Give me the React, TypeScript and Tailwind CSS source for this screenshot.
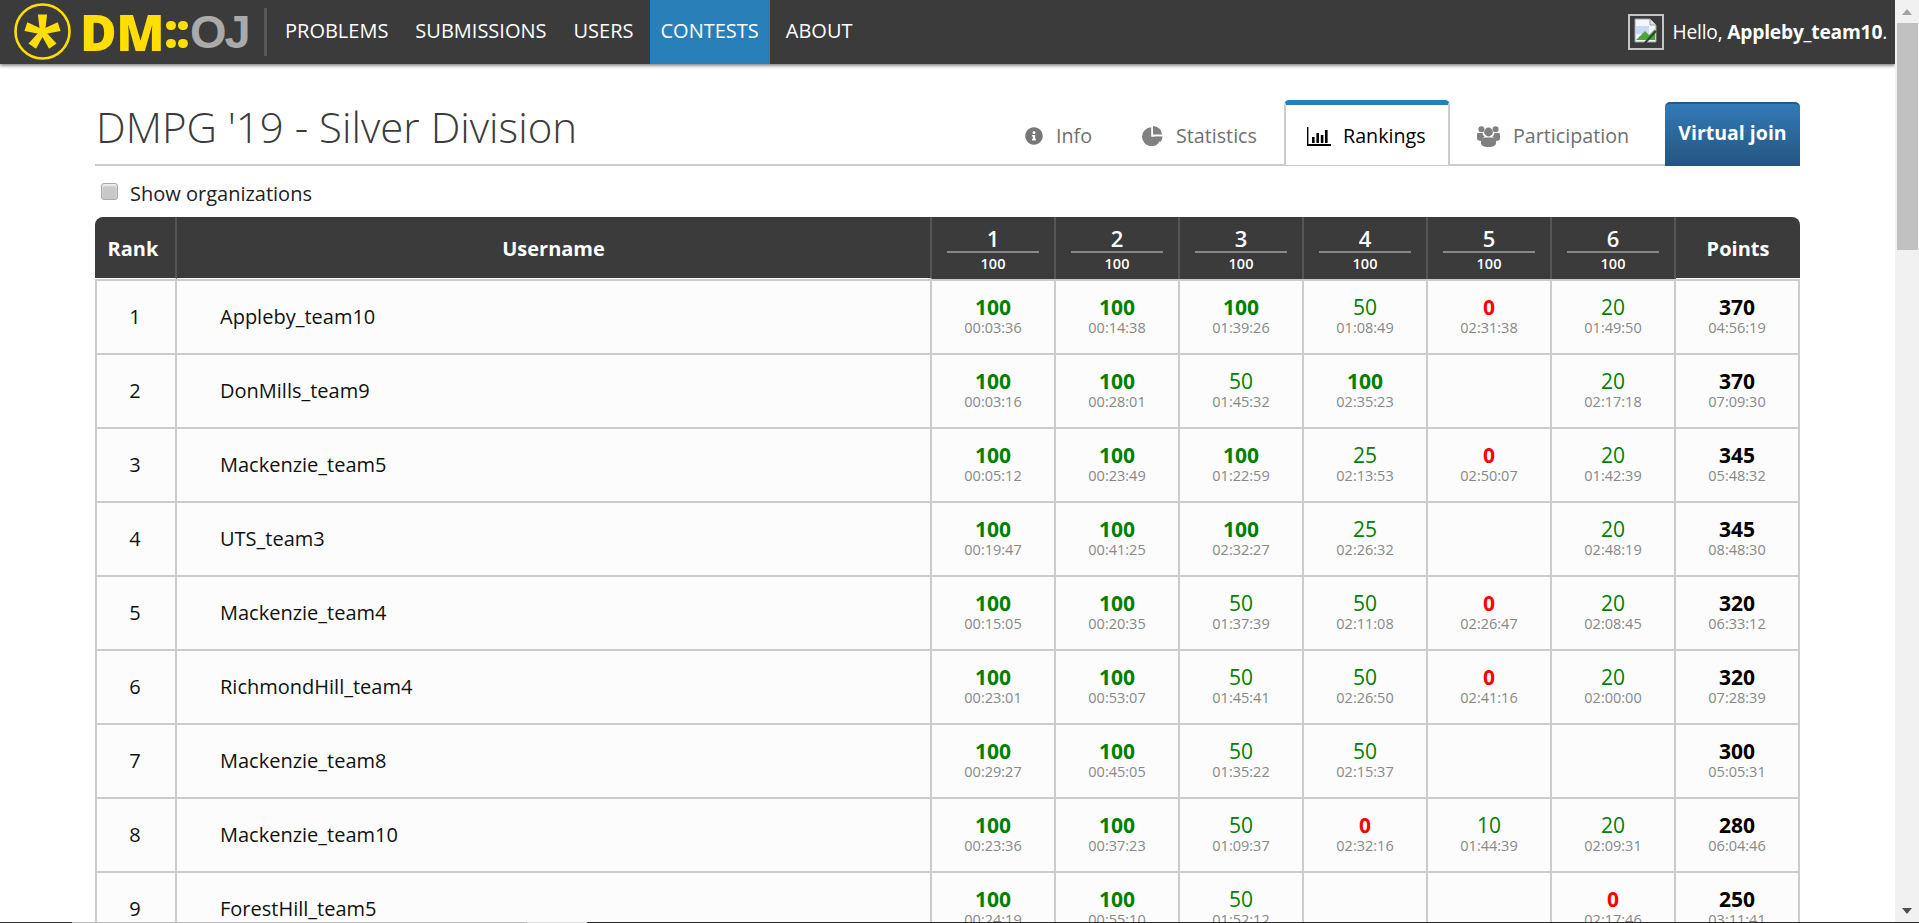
import { FaInfoCircle } from "react-icons/fa";

type Cell = [string, string] | null;
type Row = { name: string; cells: Cell[]; points: string; total: string };

const rows: Row[] = [
  { name: "Appleby_team10", points: "370", total: "04:56:19", cells: [["100", "00:03:36"], ["100", "00:14:38"], ["100", "01:39:26"], ["50", "01:08:49"], ["0", "02:31:38"], ["20", "01:49:50"]] },
  { name: "DonMills_team9", points: "370", total: "07:09:30", cells: [["100", "00:03:16"], ["100", "00:28:01"], ["50", "01:45:32"], ["100", "02:35:23"], null, ["20", "02:17:18"]] },
  { name: "Mackenzie_team5", points: "345", total: "05:48:32", cells: [["100", "00:05:12"], ["100", "00:23:49"], ["100", "01:22:59"], ["25", "02:13:53"], ["0", "02:50:07"], ["20", "01:42:39"]] },
  { name: "UTS_team3", points: "345", total: "08:48:30", cells: [["100", "00:19:47"], ["100", "00:41:25"], ["100", "02:32:27"], ["25", "02:26:32"], null, ["20", "02:48:19"]] },
  { name: "Mackenzie_team4", points: "320", total: "06:33:12", cells: [["100", "00:15:05"], ["100", "00:20:35"], ["50", "01:37:39"], ["50", "02:11:08"], ["0", "02:26:47"], ["20", "02:08:45"]] },
  { name: "RichmondHill_team4", points: "320", total: "07:28:39", cells: [["100", "00:23:01"], ["100", "00:53:07"], ["50", "01:45:41"], ["50", "02:26:50"], ["0", "02:41:16"], ["20", "02:00:00"]] },
  { name: "Mackenzie_team8", points: "300", total: "05:05:31", cells: [["100", "00:29:27"], ["100", "00:45:05"], ["50", "01:35:22"], ["50", "02:15:37"], null, null] },
  { name: "Mackenzie_team10", points: "280", total: "06:04:46", cells: [["100", "00:23:36"], ["100", "00:37:23"], ["50", "01:09:37"], ["0", "02:32:16"], ["10", "01:44:39"], ["20", "02:09:31"]] },
  { name: "ForestHill_team5", points: "250", total: "03:11:41", cells: [["100", "00:24:19"], ["100", "00:55:10"], ["50", "01:52:12"], null, null, ["0", "02:17:46"]] },
];

const navItems = ["PROBLEMS", "SUBMISSIONS", "USERS", "CONTESTS", "ABOUT"];
const gridCols = "grid grid-cols-[82px_755px_repeat(6,124px)_124px]";

function Logo() {
  return (
    <div className="flex items-center h-16 pl-[14px] w-[264px]">
      <svg width="58" height="58" viewBox="0 0 58 58" className="shrink-0">
        <circle cx="28.5" cy="28.5" r="27" fill="none" stroke="#ffde00" strokeWidth="2.6" />
        <g fill="#ffde00" transform="translate(28.5 29)">
          {[0, 72, 144, 216, 288].map((deg) => (
            <path key={deg} d="M-4.6 -17.5 L4.6 -17.5 L2.4 1 L-2.4 1 Z" transform={`rotate(${deg})`} />
          ))}
        </g>
      </svg>
      <span className="ml-[8px] text-[50px] leading-[64px] font-extrabold text-[#ffde00] font-['Open_Sans',sans-serif] tracking-[-0.5px]">DM</span>
      <div className="ml-[2px] grid grid-cols-2 gap-x-[2px] gap-y-[9px] mt-[5px]">
        <i className="w-[10px] h-[9px] rounded-full bg-[#ffde00]" />
        <i className="w-[10px] h-[9px] rounded-full bg-[#ffde00]" />
        <i className="w-[10px] h-[9px] rounded-full bg-[#ffde00]" />
        <i className="w-[10px] h-[9px] rounded-full bg-[#ffde00]" />
      </div>
      <span className="ml-[2px] text-[47px] leading-[64px] font-bold text-[#aaaaaa] font-['Liberation_Sans',sans-serif] tracking-[-2px]">OJ</span>
    </div>
  );
}

function BrokenImage() {
  return (
    <div className="w-9 h-9 border-2 border-[#c4c4c4] bg-[#3b3b3b] flex items-start justify-center pt-[2px] pl-[1px] shrink-0">
      <svg width="26" height="26" viewBox="0 0 26 26">
        <path d="M2 1h15l6 6v17H2z" fill="#f4f6fb" stroke="#9aa0a8" strokeWidth="1" />
        <path d="M17 1v6h6" fill="#dfe3ea" stroke="#9aa0a8" strokeWidth="1" />
        <path d="M3 8h13v8H3z" fill="#c7d9f5" />
        <path d="M3 22l9-9 4 4 6-6v11H3z" fill="#4aa83a" />
        <path d="M11 26l12-13" stroke="#3b3b3b" strokeWidth="2" />
      </svg>
    </div>
  );
}

function PieIcon() {
  return (
    <svg width="21" height="20" viewBox="0 0 21 20" className="mr-[13px] text-[#808080]" fill="currentColor">
      <path d="M9.2 1.2 V10.8 H19 A9.5 9.5 0 1 1 9.2 1.2 Z" />
      <path d="M11 0 A9 9 0 0 1 20 8.6 H11 Z" />
      <path d="M12.4 10.4 H20.6 A9 9 0 0 1 18.2 16 Z" />
    </svg>
  );
}

function BarsIcon() {
  return (
    <svg width="24" height="19" viewBox="0 0 24 19" className="mr-[12px]" fill="currentColor">
      <path d="M0 0h1.4v17H24v2H0z" />
      <path d="M5 10h2.6v6H5zM9.4 6h2.6v10H9.4zM13.8 8h2.6v8h-2.6zM18 3h2.6v13H18z" />
    </svg>
  );
}

function UsersIcon() {
  return (
    <svg width="23" height="21" viewBox="0 0 23 21" className="mr-[13px] text-[#808080]" fill="currentColor">
      <circle cx="4.4" cy="3.2" r="3" />
      <circle cx="18.6" cy="3.2" r="3" />
      <circle cx="11.5" cy="6" r="4.4" />
      <path d="M0 8.5C0 7.4.8 7 2 7h3.6c.3 1.6 1 3 2 3.8C5.300 11.700 4.400 13.500 4.200 15 1.600 14.800 0 13.800 0 12.500z" />
      <path d="M23 8.500C23 7.400 22.200 7 21 7h-3.600c-.3 1.600-1 3-2 3.800 2.300.9 3.200 2.700 3.400 4.200 2.600-.2 4.200-1.200 4.200-2.500z" />
      <path d="M7.500 11.500h8c2.200 0 3.500 1.300 3.500 3.400v2.300c0 2.200-3 3.800-7.500 3.800S4 19.400 4 17.200v-2.300c0-2.100 1.300-3.400 3.500-3.400z" />
    </svg>
  );
}

function Tab({ icon, label, active, className }: { icon: React.ReactNode; label: string; active?: boolean; className: string }) {
  if (active) {
    return (
      <div className={`${className} h-[65px] -mb-[1px] pt-[2px] bg-white border-x-2 border-[#ccc] border-t-[5px] border-t-[#2980b9] rounded-t-[5px] flex items-center text-black relative z-10`}>
        {icon}
        <span>{label}</span>
      </div>
    );
  }
  return (
    <div className={`${className} h-[63px] flex items-center pt-[7px] text-[#6f6f6f]`}>
      {icon}
      <span>{label}</span>
    </div>
  );
}

function Score({ value, time }: { value: string; time: string }) {
  const color =
    value === "0" ? "text-[#ff0000] font-bold" : value === "100" ? "text-[#008000] font-bold" : "text-[#008000]";
  return (
    <>
      <div className={`text-[21px] leading-[23px] ${color}`}>{value}</div>
      <div className="text-[14.5px] leading-[18px] text-[#888888]">{time}</div>
    </>
  );
}

export default function App() {
  return (
    <div className="flex flex-col h-[923px] overflow-hidden font-['Open_Sans',sans-serif] bg-white text-[#3b3b3b]">
      <div className="flex flex-1 min-h-0">
        <div className="flex-1 min-w-0">
          <header className="h-16 bg-[#3b3b3b] flex items-stretch shadow-[0_2px_3px_rgba(0,0,0,0.45)] relative z-20">
            <Logo />
            <div className="w-[3px] h-[48px] my-auto bg-[#585858]" />
            <nav className="flex ml-[7px]">
              {navItems.map((item) => (
                <div
                  key={item}
                  className={`flex items-center px-[11px] mr-[5px] pb-[2px] text-[20px] text-white ${item === "CONTESTS" ? "bg-[#2980b9]" : ""}`}
                >
                  {item}
                </div>
              ))}
            </nav>
            <div className="ml-auto flex items-center pr-[8px] text-[19.2px] text-white tracking-[-0.2px]">
              <BrokenImage />
              <span className="ml-[9px]">
                Hello, <b>Appleby_team10</b>.
              </span>
            </div>
          </header>

          <main className="px-[95px]">
            <div className="flex h-[102px] items-end border-b-2 border-[#ccc]">
              <h1 className="flex-1 text-[42px] font-light leading-none pb-[16px] pl-[1px] text-[#3b3b3b] self-end">DMPG '19 - Silver Division</h1>
              <div className="flex items-end text-[19.7px]">
                <Tab className="w-[116px] pl-[3px]" label="Info" icon={<FaInfoCircle className="w-[18px] h-[18px] mr-[13px] text-[#777]" />} />
                <Tab className="w-[146px] pl-[4px]" label="Statistics" icon={<PieIcon />} />
                <Tab active className="w-[166px] pl-[21px]" label="Rankings" icon={<BarsIcon />} />
                <Tab className="w-[215px] pl-[27px]" label="Participation" icon={<UsersIcon />} />
              </div>
              <div className="w-[135px] h-[64px] -mb-[2px] flex justify-center pt-[14px] rounded-t-[5px] text-white font-bold text-[19.5px] border-t-2 border-[#1f5a8c] bg-gradient-to-b from-[#337ab7] to-[#245580]">
                Virtual join
              </div>
            </div>

            <label className="flex items-center h-[51px] pb-[1px] pl-[6px] text-[20px] text-[#222]">
              <span className="w-[17px] h-[17px] rounded-[3px] bg-[#c9c9c9] border border-[#aaa] shadow-[inset_0_2px_2px_rgba(255,255,255,0.7)] mr-[12px]" />
              <span className="mt-[6px]">Show organizations</span>
            </label>

            <div className={`${gridCols} h-[62px] bg-[#3b3b3b] rounded-t-[8px] text-white font-bold`}>
              <div className="flex items-center justify-center pr-[4px] pt-[2px] border-r-2 border-b border-r-[#555] border-b-white text-[20px]">Rank</div>
              <div className="flex items-center justify-center pt-[2px] border-r-2 border-b border-r-[#555] border-b-white text-[20px]">Username</div>
              {[1, 2, 3, 4, 5, 6].map((n) => (
                <div key={n} className="border-r-2 border-[#555] px-[15px] pt-[8px] text-center">
                  <div className="text-[22px] leading-[26px] font-semibold border-b-2 border-[#888]">{n}</div>
                  <div className="text-[14.5px] leading-[21px] font-semibold">100</div>
                </div>
              ))}
              <div className="flex items-center justify-center pt-[2px] border-b border-white text-[20px]">Points</div>
            </div>

            <div className="border-t-2 border-l-2 border-[#ccc] bg-[#fcfcfc] w-[1705px]">
              {rows.map((row, i) => (
                <div key={row.name} className={`${gridCols} -ml-[2px] h-[74px] border-b-2 border-[#ccc]`}>
                  <div className="flex items-center justify-center border-r-2 border-[#ccc] pb-[1px] text-[20px] text-[#111]">{i + 1}</div>
                  <div className="flex items-center pl-[43px] pb-[1px] border-r-2 border-[#ccc] text-[20px] text-[#111]">{row.name}</div>
                  {row.cells.map((cell, j) => (
                    <div key={j} className="border-r-2 border-[#ccc] text-center pt-[15px]">
                      {cell && <Score value={cell[0]} time={cell[1]} />}
                    </div>
                  ))}
                  <div className="border-r-2 border-[#ccc] text-center pt-[15px]">
                    <div className="text-[21px] leading-[23px] font-bold text-black">{row.points}</div>
                    <div className="text-[14.5px] leading-[18px] text-[#888888]">{row.total}</div>
                  </div>
                </div>
              ))}
            </div>
          </main>
        </div>

        {/* scrollbar */}
        <div className="w-6 shrink-0 bg-[#f1f1f1] flex flex-col items-center relative z-30">
          <div className="h-[23px] flex items-center justify-center">
            <div className="w-0 h-0 border-x-[5px] border-x-transparent border-b-[6px] border-b-[#a3a3a3]" />
          </div>
          <div className="w-[21px] h-[227px] bg-[#c1c1c1]" />
          <div className="mt-auto h-[23px] flex items-center justify-center">
            <div className="w-0 h-0 border-x-[5px] border-x-transparent border-t-[6px] border-t-[#505050]" />
          </div>
        </div>
      </div>

      {/* strip of the taskbar at the very bottom of the shot */}
      <div className="flex h-px shrink-0 relative z-30">
        <div className="w-[72px] bg-[#333]" />
        <div className="w-[455px] bg-[#bbb]" />
        <div className="w-[60px] bg-[#ddd]" />
        <div className="flex-1 bg-[#2a2a2a]" />
      </div>
    </div>
  );
}
